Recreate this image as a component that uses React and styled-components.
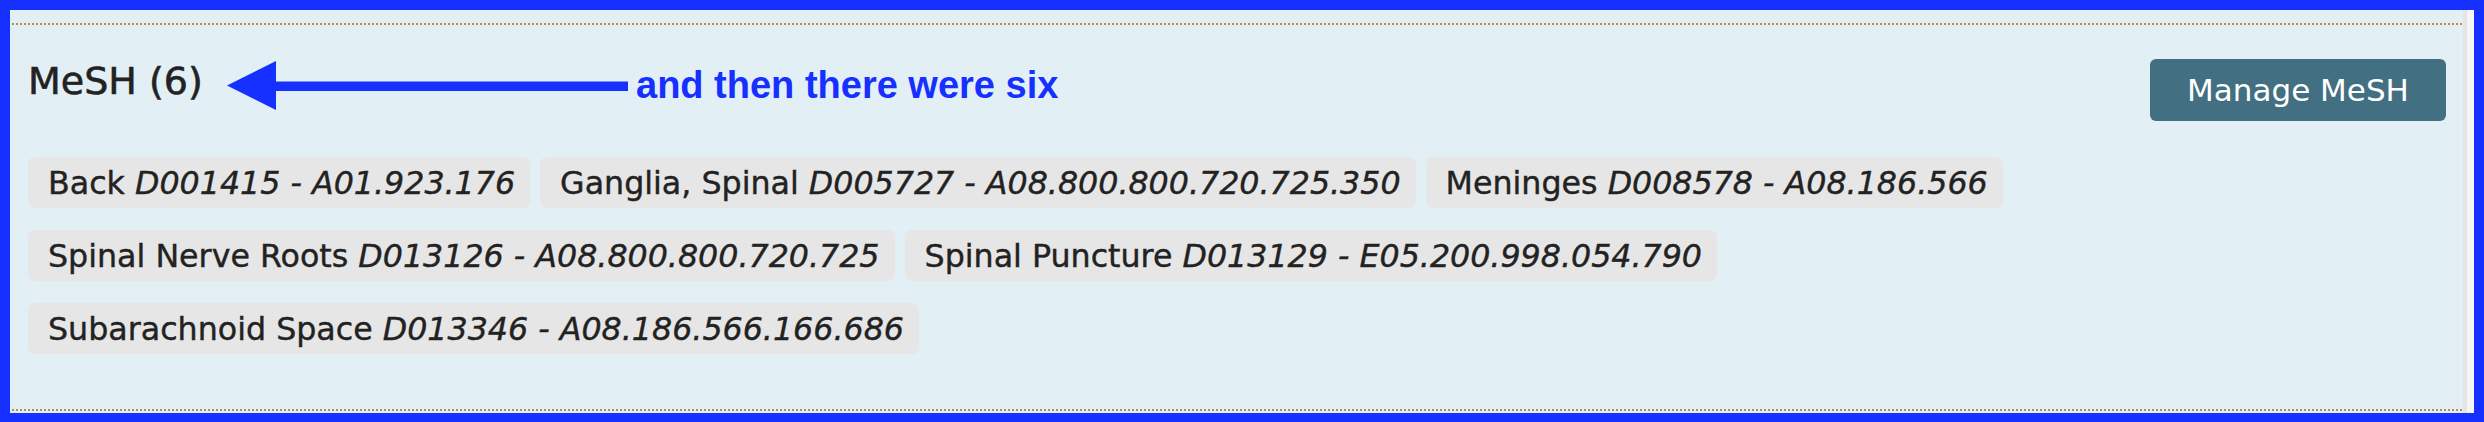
import React from 'react';
import styled, { createGlobalStyle } from 'styled-components';

const GlobalStyle = createGlobalStyle`
  html, body {
    margin: 0;
    padding: 0;
    background: #1530ff;
  }
  body {
    font-family: "DejaVu Sans", Lato, sans-serif;
  }
`;

const Frame = styled.div`
  width: 2484px;
  height: 422px;
  box-sizing: border-box;
  border: 10px solid #1530ff;
  border-bottom-width: 9px;
  display: flex;
  background: #e2eff5;
`;

const Panel = styled.div`
  flex: 1;
  padding: 13px 1px 2px 2px;
  background: #e2eff5;
`;

const Scrollbar = styled.div`
  width: 11px;
  box-sizing: border-box;
  border-left: 4px solid #e4e4e4;
  background: #f5f5f5;
`;

const Section = styled.section`
  position: relative;
  height: 100%;
  box-sizing: border-box;
  border-top: 2px dotted #cd853f;
  border-bottom: 2px dotted #cd853f;
  padding: 34px 16px 0 16px;
`;

const Header = styled.div`
  display: flex;
  justify-content: space-between;
  align-items: flex-start;
`;

const Heading = styled.h2`
  margin: 0;
  font-size: 38px;
  line-height: 45px;
  font-weight: 400;
  color: #222;
  -webkit-text-stroke: 0.6px #222;
`;

const ManageButton = styled.button`
  width: 296px;
  height: 62px;
  border: none;
  border-radius: 6px;
  background: #426f82;
  color: #fff;
  font-family: inherit;
  font-size: 31px;
  font-weight: 400;
  cursor: pointer;
`;

const Annotation = styled.div`
  position: absolute;
  left: 215px;
  top: 36px;
  display: flex;
  align-items: flex-start;
  pointer-events: none;
`;

const Note = styled.span`
  margin: 3px 0 0 8px;
  font-family: "Liberation Sans", Arial, sans-serif;
  font-weight: 700;
  font-size: 38px;
  line-height: 43px;
  color: #1530ff;
  white-space: nowrap;
`;

const TagList = styled.div`
  display: flex;
  flex-wrap: wrap;
  column-gap: 10px;
  margin-top: 36px;
`;

const Tag = styled.span`
  display: inline-flex;
  align-items: center;
  height: 51px;
  margin-bottom: 22px;
  padding: 0 15px 0 20px;
  border-radius: 7px;
  background: #e6e6e6;
  color: #222;
  font-size: 31.7px;
  font-weight: 400;
  -webkit-text-stroke: 0.4px #222;
  white-space: pre;
`;

const Code = styled.em`
  font-style: italic;
`;

const terms = [
  { name: 'Back', id: 'D001415', tree: 'A01.923.176' },
  { name: 'Ganglia, Spinal', id: 'D005727', tree: 'A08.800.800.720.725.350' },
  { name: 'Meninges', id: 'D008578', tree: 'A08.186.566' },
  { name: 'Spinal Nerve Roots', id: 'D013126', tree: 'A08.800.800.720.725' },
  { name: 'Spinal Puncture', id: 'D013129', tree: 'E05.200.998.054.790' },
  { name: 'Subarachnoid Space', id: 'D013346', tree: 'A08.186.566.166.686' },
];

function Arrow() {
  return (
    <svg width="401" height="49" viewBox="0 0 401 49">
      <polygon points="0,24.5 49,0 49,49" fill="#1530ff" />
      <rect x="48" y="20.5" width="353" height="9.5" fill="#1530ff" />
    </svg>
  );
}

function App() {
  return (
    <>
      <GlobalStyle />
      <Frame>
        <Panel>
          <Section>
            <Header>
              <Heading>MeSH ({terms.length})</Heading>
              <ManageButton type="button">Manage MeSH</ManageButton>
            </Header>

            <Annotation>
              <Arrow />
              <Note>and then there were six</Note>
            </Annotation>

            <TagList>
              {terms.map((t) => (
                <Tag key={t.id}>
                  {t.name} <Code>{t.id} - {t.tree}</Code>
                </Tag>
              ))}
            </TagList>
          </Section>
        </Panel>
        <Scrollbar />
      </Frame>
    </>
  );
}

export default App;
